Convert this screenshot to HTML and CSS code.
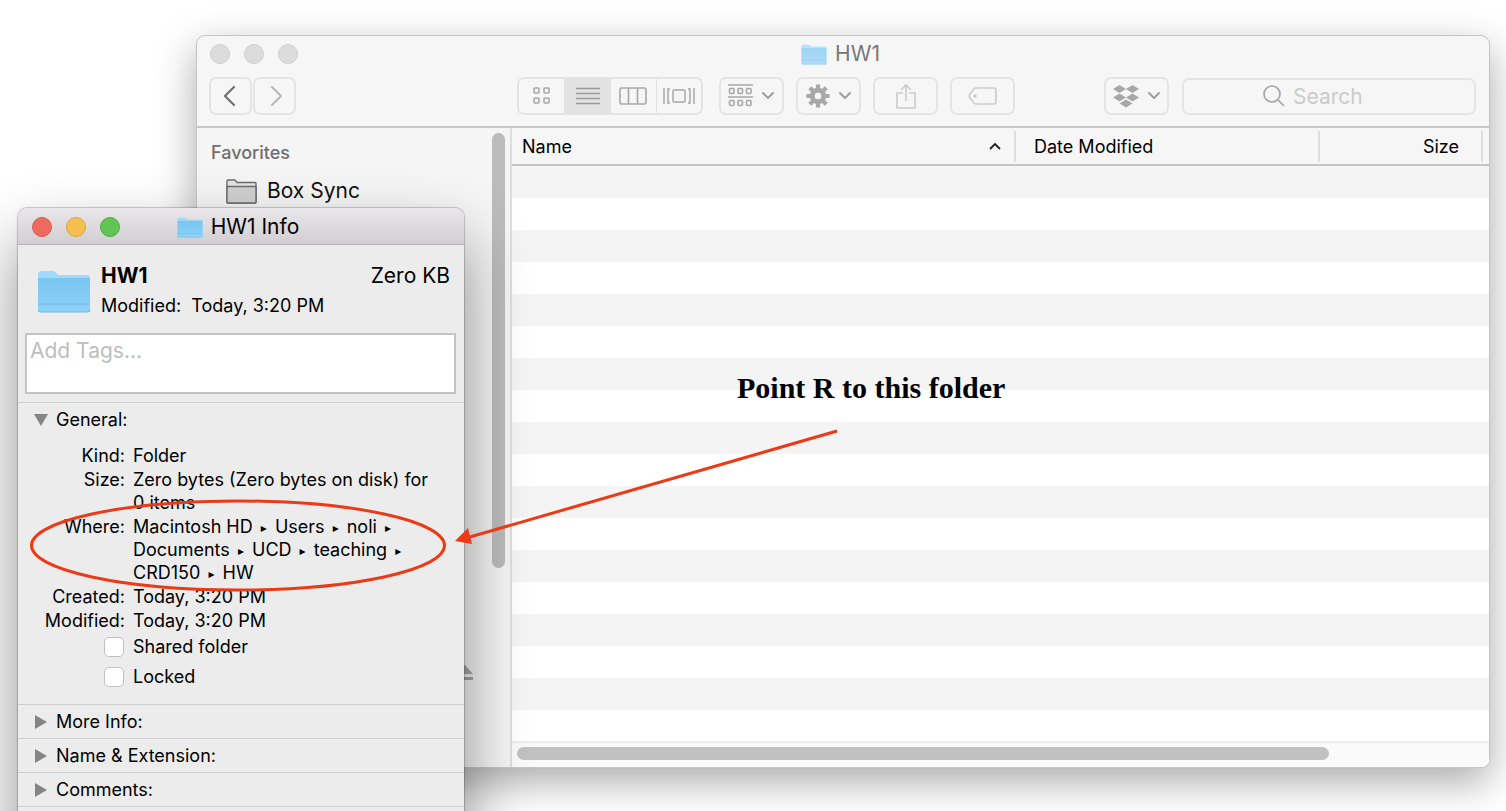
FILE: index.html
```html
<!DOCTYPE html>
<html lang="en">
<head>
<meta charset="utf-8">
<meta name="viewport" content="width=device-width, initial-scale=1">
<title>HW1</title>
<link rel="stylesheet" href="styles.css">
</head>
<body>
<svg width="0" height="0" class="defs" aria-hidden="true">
  <defs>
    <linearGradient id="blue" x1="0" y1="0" x2="0" y2="1"><stop offset="0" stop-color="#7ac5f1"/><stop offset="1" stop-color="#8dd2f8"/></linearGradient>
    <symbol id="folder" viewBox="0 0 54 43">
      <path d="M1 5q0-4 3-4h12q2 0 3 2l2 2h30q2 0 2 3v31q0 3-2 3H3q-2 0-2-3z" fill="#a0dafa"/>
      <path d="M1 8h52v31q0 3-2 3H3q-2 0-2-3z" fill="url(#blue)"/>
      <path d="M1 34h52M1 40q1 2 2 2h48q2 0 2-2" stroke="#74b9e2" fill="none"/>
    </symbol>
    <symbol id="chev" viewBox="0 0 14 10"><path d="M2 2l5 5 5-5" fill="none" stroke="#9f9f9f" stroke-width="2" stroke-linecap="round" stroke-linejoin="round"/></symbol>
  </defs>
</svg>
<main class="desktop">
  <section class="window finder" aria-label="HW1">
    <header class="finder-head">
      <div class="titlebar">
        <div class="lights"><button aria-label="Close"></button><button aria-label="Minimize"></button><button aria-label="Zoom"></button></div>
        <h1 class="title"><svg class="title-icon" aria-hidden="true"><use href="#folder"/></svg>HW1</h1>
        <span></span>
      </div>
      <div class="toolbar">
        <div class="nav">
          <button class="tool nav-btn" aria-label="Back"><svg width="14" height="22" viewBox="0 0 14 22"><path d="M10 2L1 11l9 9" fill="none" stroke="#707070" stroke-width="2.2" stroke-linecap="round"/></svg></button>
          <button class="tool nav-btn" aria-label="Forward"><svg width="14" height="22" viewBox="0 0 14 22"><path d="M4 2l9 9-9 9" fill="none" stroke="#b8b8b8" stroke-width="2.2" stroke-linecap="round"/></svg></button>
        </div>
        <span class="space-wide"></span>
        <div class="views">
          <button aria-label="Icons"><svg width="18" height="18" viewBox="0 0 18 18" fill="none" stroke="#a8a8a8" stroke-width="1.6"><rect x="1" y="1" width="5" height="5" rx="1"/><rect x="11" y="1" width="5" height="5" rx="1"/><rect x="1" y="11" width="5" height="5" rx="1"/><rect x="11" y="11" width="5" height="5" rx="1"/></svg></button>
          <button class="on" aria-label="List"><svg width="24" height="18" viewBox="0 0 24 18"><path d="M0 1.5h24M0 6.5h24M0 11.5h24M0 16.5h24" stroke="#9b9b9b" stroke-width="1.5"/></svg></button>
          <button aria-label="Columns"><svg width="28" height="18" viewBox="0 0 28 18" fill="none" stroke="#a8a8a8" stroke-width="1.6"><rect x="1" y="1" width="26" height="16" rx="1.5"/><path d="M9.5 1v16M18.500 1v16"/></svg></button>
          <button aria-label="Cover Flow"><svg width="32" height="18" viewBox="0 0 32 18" fill="none" stroke="#a8a8a8" stroke-width="1.5"><rect x="10" y="3" width="12" height="12" rx="1"/><path d="M1 1v16M31 1v16M7 2H5v14h2M25 2h2v14h-2"/></svg></button>
        </div>
        <div class="tools">
          <button class="tool" aria-label="Arrange"><svg width="25" height="24" viewBox="0 0 25 24" fill="none" stroke="#a8a8a8" stroke-width="1.6"><path d="M0 1h25M0 13h25"/><rect x="1.500" y="4.500" width="4.500" height="5" rx="1"/><rect x="10" y="4.500" width="4.500" height="5" rx="1"/><rect x="18.500" y="4.500" width="4.500" height="5" rx="1"/><rect x="1.500" y="16.500" width="4.500" height="5" rx="1"/><rect x="10" y="16.500" width="4.500" height="5" rx="1"/><rect x="18.500" y="16.500" width="4.500" height="5" rx="1"/></svg><svg class="chev" aria-hidden="true"><use href="#chev"/></svg></button>
          <button class="tool" aria-label="Action"><svg width="24" height="24" viewBox="-12 -12 24 24"><circle r="5.800" fill="none" stroke="#a8a8a8" stroke-width="5"/><g stroke="#a8a8a8" stroke-width="4.200"><path d="M0-11.600V-7M0 7v4.600M-11.600 0H-7M7 0h4.600M-8.200-8.200L-5-5M5 5l3.200 3.200M-8.200 8.200L-5 5M5-5l3.200-3.200"/></g></svg><svg class="chev" aria-hidden="true"><use href="#chev"/></svg></button>
          <button class="tool" aria-label="Share"><svg width="20" height="27" viewBox="0 0 20 27" fill="none" stroke="#cbcbcb" stroke-width="1.6"><path d="M7 10H1v15h18V10h-6M10 18V2M5 7l5-5 5 5"/></svg></button>
          <button class="tool" aria-label="Edit tags"><svg width="29" height="18" viewBox="0 0 29 18" fill="none" stroke="#cbcbcb" stroke-width="1.6"><path d="M8 1h18q2 0 2 2v12q0 2-2 2H8q-2 0-3-2L1.500 10q-1-1 0-2L5 3q1-2 3-2z"/><circle cx="7" cy="9" r="1" fill="#cbcbcb"/></svg></button>
        </div>
        <span class="space-narrow"></span>
        <button class="tool dropbox" aria-label="Dropbox"><svg width="26" height="23" viewBox="0 0 26 23" fill="#a8a8a8"><path d="M6.500 0l6.500 4-6.500 4L0 4zM19.500 0L26 4l-6.500 4L13 4zM6.500 8.500l6.500 4-6.500 4-6.500-4zM19.500 8.500l6.500 4-6.500 4-6.500-4zM13 14.500l6.500 4-6.500 4-6.500-4z"/></svg><svg class="chev" aria-hidden="true"><use href="#chev"/></svg></button>
        <label class="search"><svg width="22" height="22" viewBox="0 0 22 22" fill="none" stroke="#a5a5a5" stroke-width="1.7"><circle cx="9" cy="9" r="8"/><path d="M15 15l6 6"/></svg><input type="search" placeholder="Search" aria-label="Search"></label>
      </div>
    </header>
    <div class="finder-body">
      <nav class="sidebar" aria-label="Sidebar">
        <div class="side-items">
          <h2>Favorites</h2>
          <a href="#box"><svg width="31" height="25" viewBox="0 0 31 25" fill="#d0d0d0" stroke="#6c6c6c" stroke-width="1.4"><path d="M1 23V2q0-1 1-1h7l2 2.500h18q1 0 1 1V23q0 1-1 1H2q-1 0-1-1z" fill="#e4e4e4"/><path d="M1 7.500h29V23q0 1-1 1H2q-1 0-1-1z"/></svg>Box Sync</a>
          <button class="eject" aria-label="Eject"><svg width="18" height="16" viewBox="0 0 18 16" fill="#a8a8a8"><path d="M9 0l8 9H1zM1 12h16v3H1z"/></svg></button>
        </div>
        <div class="side-scroll"></div>
      </nav>
      <div class="files">
        <table>
          <thead><tr><th class="c-name"><div>Name<svg width="14" height="10" viewBox="0 0 14 10"><path d="M2 8l5-5 5 5" fill="none" stroke="#222" stroke-width="1.800"/></svg></div></th><th class="c-date"><div>Date Modified</div></th><th class="c-size"><div>Size</div></th><th class="c-end"><div></div></th></tr></thead>
        </table>
        <div class="stripes"></div>
        <div class="hscroll"><div></div></div>
      </div>
    </div>
  </section>

  <section class="window info" aria-label="HW1 Info">
    <header class="info-title titlebar">
      <div class="lights lit"><button class="red" aria-label="Close"></button><button class="yellow" aria-label="Minimize"></button><button class="green" aria-label="Zoom"></button></div>
      <h1 class="title"><svg class="title-icon" aria-hidden="true"><use href="#folder"/></svg>HW1 Info</h1>
      <span></span>
    </header>
    <div class="summary">
      <svg class="big-icon" aria-hidden="true"><use href="#folder"/></svg>
      <div class="summary-text">
        <div class="summary-line"><strong>HW1</strong><span>Zero KB</span></div>
        <div class="modified">Modified:&nbsp; Today, 3:20 PM</div>
      </div>
    </div>
    <textarea class="tags" placeholder="Add Tags..." aria-label="Tags"></textarea>
    <div class="general">
      <button class="disclose"><svg width="14" height="14" viewBox="0 0 14 14"><path d="M0 1h14L7 13z" fill="#848484"/></svg>General:</button>
      <dl>
        <dt>Kind:</dt><dd>Folder</dd>
        <dt>Size:</dt><dd>Zero bytes (Zero bytes on disk) for<br>0 items</dd>
        <dt>Where:</dt><dd>Macintosh HD <i>▸</i> Users <i>▸</i> noli <i>▸</i><br>Documents <i>▸</i> UCD <i>▸</i> teaching <i>▸</i><br>CRD150 <i>▸</i> HW</dd>
        <dt>Created:</dt><dd>Today, 3:20 PM</dd>
        <dt>Modified:</dt><dd>Today, 3:20 PM</dd>
      </dl>
      <div class="checks">
        <label><input type="checkbox">Shared folder</label>
        <label><input type="checkbox">Locked</label>
      </div>
    </div>
    <button class="disclose section"><svg width="14" height="16" viewBox="0 0 14 16"><path d="M1 1v14l12-7z" fill="#848484"/></svg>More Info:</button>
    <button class="disclose section"><svg width="14" height="16" viewBox="0 0 14 16"><path d="M1 1v14l12-7z" fill="#848484"/></svg>Name &amp; Extension:</button>
    <button class="disclose section"><svg width="14" height="16" viewBox="0 0 14 16"><path d="M1 1v14l12-7z" fill="#848484"/></svg>Comments:</button>
    <div class="section rest"></div>
  </section>

  <svg class="marks" width="1506" height="811" viewBox="0 0 1506 811" aria-hidden="true">
    <ellipse cx="238" cy="545.500" rx="206.500" ry="44.500" fill="none" stroke="#ec3a17" stroke-width="3"/>
    <path d="M837 431L468 537.500" stroke="#ec3a17" stroke-width="3"/>
    <path d="M455 541l13-13 4 16z" fill="#ec3a17"/>
  </svg>
  <p class="note">Point R to this folder</p>
</main>
</body>
</html>
```
FILE: styles.css
```css
* { box-sizing: border-box; }
body { margin: 0; background: #fff; color: #000; font-family: Inter, Roboto, "Liberation Sans", sans-serif; font-size: 18px; }
button { margin: 0; padding: 0; border: 0; background: none; font: inherit; color: inherit; }
h1, h2, p, dl, dd { margin: 0; }
svg { display: block; flex: none; }
.defs { position: absolute; }
.desktop { position: relative; height: 100vh; overflow: hidden; }
.window { position: absolute; display: flex; flex-direction: column; }

/* Shared title bar */
.titlebar { display: grid; grid-template-columns: 1fr auto 1fr; align-items: center; height: 36px; padding: 0 18px 0 13px; }
.lights { display: flex; gap: 14px; }
.lights button { width: 20px; height: 20px; border-radius: 50%; background: #dcdcdc; border: 1px solid #cecece; }
.lights .red { background: #ee6a5f; border-color: #d65a50; }
.lights .yellow { background: #f5bf4f; border-color: #d9a43c; }
.lights .green { background: #61c554; border-color: #4ea73f; }
.title { display: flex; align-items: center; gap: 8px; font-size: 21px; line-height: 24px; font-weight: 400; }
.title-icon { width: 26px; height: 21px; }

/* Finder */
.finder { left: 196px; top: 35px; right: 16px; bottom: 43px; border-radius: 9px; background: #f6f6f6; border: 1px solid #c4c4c4; box-shadow: 0 14px 40px rgba(0,0,0,.34); overflow: hidden; }
.finder-head { border-bottom: 2px solid #c8c8c8; }
.finder .title { color: #767676; }
.finder .title-icon { opacity: .7; }
.toolbar { display: flex; align-items: center; height: 54px; padding: 0 13px 6px 12px; }
.nav { display: flex; gap: 1px; }
.tool, .views { display: flex; align-items: center; justify-content: center; height: 38px; border: 2px solid #e4e4e4; border-radius: 7px; }
.tool { width: 65px; gap: 8px; }
.nav .nav-btn { width: 43px; }
.chev { width: 14px; height: 10px; }
.space-wide { flex: 5; }
.space-narrow { flex: 2; }
.views { width: 186px; overflow: hidden; }
.views button { display: flex; flex: 1; align-items: center; justify-content: center; height: 100%; }
.views button + button { border-left: 1px solid #e0e0e0; }
.views .on { background: #e2e2e2; }
.tools { display: flex; gap: 12px; margin-left: 16px; }
.search { display: flex; align-items: center; gap: 8px; width: 294px; height: 37px; margin-left: 13px; padding-left: 79px; border: 2px solid #e4e4e4; border-radius: 7px; }
.search input { width: 120px; padding: 0; border: 0; outline: 0; background: none; font: inherit; font-size: 21px; }
.search input::placeholder { color: #cbcbcb; opacity: 1; }
.finder-body { display: flex; flex: 1; min-height: 0; }
.sidebar { display: flex; width: 315px; border-right: 2px solid #dedede; background: #f5f5f5; }
.side-items { display: flex; flex: 1; flex-direction: column; padding: 13px 18px 86px 14px; }
.sidebar h2 { color: #6e6e6e; font-size: 18px; line-height: 24px; font-weight: 500; }
.sidebar a { display: flex; align-items: center; gap: 10px; margin-top: 13px; padding-left: 15px; color: #111; font-size: 21px; line-height: 26px; text-decoration: none; }
.eject { align-self: flex-end; margin-top: auto; }
.side-scroll { width: 13px; height: 435px; margin: 5px 5px 0 0; border-radius: 7px; background: #bcbcbc; }
.files { display: flex; flex: 1; flex-direction: column; min-width: 0; background: #fff; }
table { width: 100%; border-collapse: collapse; table-layout: fixed; background: #f6f6f6; }
thead tr { border-bottom: 2px solid #c4c4c4; }
th { height: 37px; padding: 0; font-weight: 400; text-align: left; }
th div { display: flex; align-items: center; justify-content: space-between; height: 31px; border-right: 2px solid #dedede; }
.c-name div { padding: 0 12px 0 10px; }
.c-date { width: 304px; }
.c-date div { padding-left: 18px; }
.c-size { width: 163px; }
.c-size div { justify-content: flex-end; padding-right: 22px; }
.c-end { width: 6px; }
.c-end div { border: 0; }
.stripes { flex: 1; background: repeating-linear-gradient(#f4f4f4 0 32px, #fff 32px 64px); }
.hscroll { height: 26px; padding: 4px 5px; border-top: 2px solid #ededed; background: #fafafa; }
.hscroll div { width: 84%; height: 13px; border-radius: 7px; background: #c1c1c1; }

/* Info panel */
.info { left: 18px; top: 208px; width: 446px; bottom: -56px; border-radius: 9px 9px 0 0; background: #ececec; box-shadow: 0 0 1px 1px rgba(0,0,0,.2), 0 32px 64px rgba(0,0,0,.44); }
.info-title { height: 37px; border-bottom: 1px solid #b5b3b5; border-radius: 9px 9px 0 0; background: linear-gradient(#e9e7e9, #d1cfd1); padding: 2px 20px 0 14px; }
.summary { display: flex; gap: 10px; height: 88px; padding: 17px 14px 0 19px; }
.big-icon { width: 54px; height: 43px; margin-top: 8px; }
.summary-text { flex: 1; }
.summary-line { display: flex; justify-content: space-between; font-size: 21px; line-height: 28px; }
.modified { line-height: 32px; }
.tags { display: block; width: calc(100% - 15px); height: 61px; margin: 0 8px 0 7px; padding: 3px; border: 2px solid #c3c3c3; background: #fff; font: inherit; font-size: 21px; line-height: 26px; resize: none; outline: 0; }
.tags::placeholder { color: #bdbdbd; opacity: 1; }
.general { height: 302px; margin-top: 8px; border-top: 1px solid #d0d0d0; padding-top: 4px; }
.disclose { display: flex; align-items: center; gap: 8px; width: 100%; padding-left: 16px; line-height: 26px; text-align: left; }
dl { display: grid; grid-template-columns: 107px 1fr; column-gap: 8px; row-gap: 1px; margin-top: 11px; line-height: 23px; }
dt { text-align: right; }
dd i { margin: 0 3px; font: 12px "DejaVu Sans", sans-serif; line-height: 1; vertical-align: 1px; }
.checks { display: flex; flex-direction: column; gap: 4px; margin-top: 2px; padding-left: 86px; }
.checks label { display: flex; align-items: center; gap: 9px; width: fit-content; line-height: 26px; }
.checks input { appearance: none; width: 20px; height: 20px; margin: 0; border: 1px solid #c0c0c0; border-radius: 5px; background: #fff; }
.section { border-top: 1px solid #cecece; height: 34px; }
.rest { flex: 1; }

/* Annotations */
.marks { position: absolute; left: 0; top: 0; }
.note { position: absolute; left: 737px; top: 371px; font: bold 30px/34px "Liberation Serif", serif; white-space: nowrap; }
```
